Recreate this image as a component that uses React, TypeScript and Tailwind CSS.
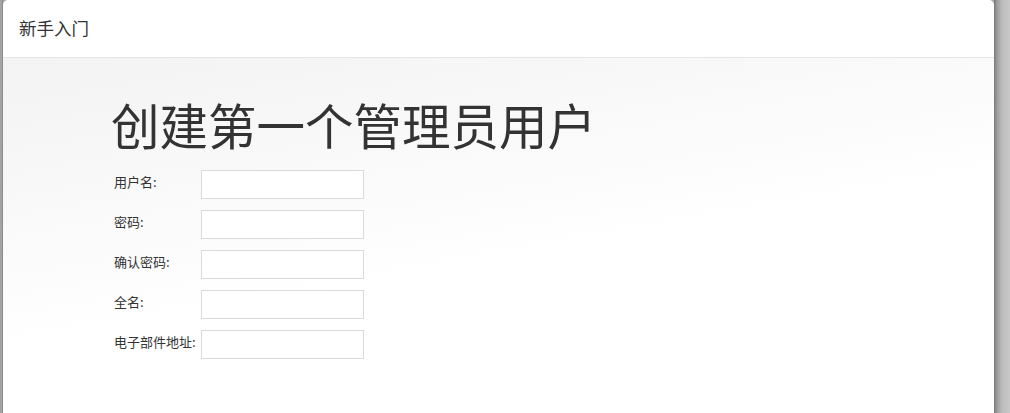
import React from "react";

const fields = ["用户名:", "密码:", "确认密码:", "全名:", "电子部件地址:"];

export default function App() {
  return (
    <div
      className="flex h-[413px] w-[1010px] overflow-hidden bg-[#a6a6a6]"
      style={{ fontFamily: '"Noto Sans CJK SC", "Noto Sans", sans-serif' }}
    >
      <div className="w-[3px] shrink-0 bg-[#a3a3a3] border-r border-[#8c8c8c]" />
      <div className="flex w-[991px] shrink-0 flex-col rounded-t-[5px] bg-white">
        <div className="flex h-[58px] shrink-0 items-center border-b border-[#e5e5e5] pl-[16px] text-[17.5px] text-[#333]">
          新手入门
        </div>
        <div className="flex-1 bg-[linear-gradient(170deg,#f3f3f3_0%,#f8f8f8_25%,#ffffff_55%)] pl-[108px] pt-[36px]">
          <h1 className="text-[48.5px] leading-[60px] font-normal text-[#333]">
            创建第一个管理员用户
          </h1>
          <div className="mt-[16px] flex flex-col gap-[11px]">
            {fields.map((f) => (
              <div key={f} className="flex items-start">
                <label className="w-[90px] shrink-0 pl-[3px] pt-[3px] text-[13px] leading-[18px] text-[#333] whitespace-nowrap">
                  {f}
                </label>
                <input
                  type="text"
                  className="h-[29px] w-[163px] border border-[#dadada] bg-white outline-none"
                />
              </div>
            ))}
          </div>
        </div>
      </div>
      <div className="w-[16px] shrink-0 bg-[linear-gradient(90deg,#7a7a7a_0%,#9e9e9e_20%,#bdbdbd_50%,#c8c8c8_100%)]" />
    </div>
  );
}
